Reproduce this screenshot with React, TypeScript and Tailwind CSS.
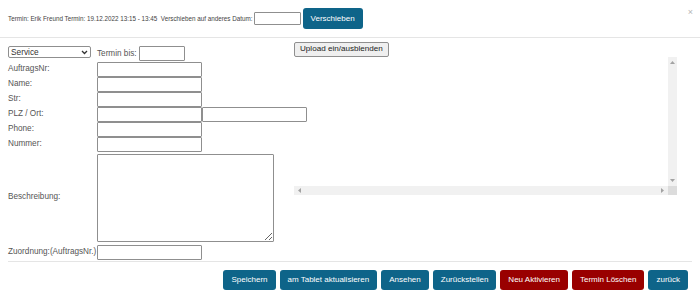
import React from 'react';

const inputCls = 'block h-[15px] w-[105px] border border-[#8f8f8f] bg-white rounded-[1px]';

const fields = ['AuftragsNr:', 'Name:', 'Str:', 'PLZ / Ort:', 'Phone:', 'Nummer:'];

function Btn({ children, red }: { children: React.ReactNode; red?: boolean }) {
  return (
    <button
      className={
        'h-[20px] px-[8px] rounded-[3px] text-white text-[8px] leading-none ' +
        (red ? 'bg-[#990000]' : 'bg-[#0e6489]')
      }
    >
      {children}
    </button>
  );
}

export default function App() {
  return (
    <div className="relative w-[700px] h-[293px] bg-white overflow-hidden text-[#444] font-['Liberation_Sans',Arial,sans-serif]">
      {/* header */}
      <div className="h-[38px] flex items-center pl-[8px] border-b border-[#e5e5e5]">
        <span className="text-[6.3px] text-[#444] whitespace-pre">
          Termin: Erik Freund Termin: 19.12.2022 13:15 - 13:45  Verschieben auf anderes Datum:
        </span>
        <input className="ml-[1px] h-[13px] w-[47px] border border-[#8f8f8f] rounded-[1px]" />
        <button className="ml-[2px] h-[21px] w-[60px] rounded-[3px] bg-[#0e6489] text-white text-[8px]">
          Verschieben
        </button>
      </div>
      <span className="absolute right-[7px] top-[8px] text-[9px] leading-none text-[#b5b5b5]">×</span>

      {/* body */}
      <div className="flex pl-[8px]">
        <div className="w-[286px] shrink-0 pt-[8px] text-[8.2px] text-[#555]">
          <div className="flex items-start gap-[6px] h-[16px]">
            <div className="h-[12px] w-[83px] border border-[#8f8f8f] rounded-[2px] flex items-center justify-between px-[2px] text-[8.3px] text-[#333]">
              <span>Service</span>
              <svg width="7" height="5" viewBox="0 0 7 5">
                <path d="M1 1 L3.5 3.5 L6 1" fill="none" stroke="#333" strokeWidth="1.3" />
              </svg>
            </div>
            <div className="flex items-center gap-[2px]">
              <span className="mt-[1px]">Termin bis:</span>
              <input className="h-[15px] w-[46px] border border-[#8f8f8f] rounded-[1px]" />
            </div>
          </div>
          <div className="grid grid-cols-[89px_auto] items-center">
            {fields.map((f) => (
              <React.Fragment key={f}>
                <span>{f}</span>
                <div className="flex">
                  <input className={inputCls} />
                  {f === 'PLZ / Ort:' && <input className={inputCls} />}
                </div>
              </React.Fragment>
            ))}
            <span>Beschreibung:</span>
            <textarea className="block mt-[2px] h-[88px] w-[177px] border border-[#8f8f8f] rounded-[1px] resize" />
          </div>
          <div className="flex items-center mt-[3px]">
            <span className="w-[89px] whitespace-nowrap">Zuordnung:(AuftragsNr.)</span>
            <input className={inputCls} />
          </div>
        </div>

        {/* upload side */}
        <div className="w-[383px] shrink-0 pt-[4px]">
          <button className="block h-[15px] px-[5px] border border-[#8f8f8f] bg-[#efefef] rounded-[2px] text-[8.1px] text-[#222] leading-none">
            Upload ein/ausblenden
          </button>
          <div className="relative h-[138px] w-[383px]">
            <div className="absolute right-0 top-0 w-[9px] h-[129px] bg-[#f1f1f1] flex flex-col items-center justify-between py-[4px]">
              <svg width="5" height="3" viewBox="0 0 5 3"><path d="M0 3 L2.5 0 L5 3Z" fill="#a3a3a3" /></svg>
              <svg width="5" height="3" viewBox="0 0 5 3"><path d="M0 0 L2.5 3 L5 0Z" fill="#a3a3a3" /></svg>
            </div>
            <div className="absolute left-0 bottom-0 w-[374px] h-[9px] bg-[#f1f1f1] flex items-center justify-between px-[4px]">
              <svg width="3" height="5" viewBox="0 0 3 5"><path d="M3 0 L0 2.5 L3 5Z" fill="#a3a3a3" /></svg>
              <svg width="3" height="5" viewBox="0 0 3 5"><path d="M0 0 L3 2.5 L0 5Z" fill="#a3a3a3" /></svg>
            </div>
            <div className="absolute right-0 bottom-0 w-[9px] h-[9px] bg-[#dcdcdc]" />
          </div>
        </div>
      </div>

      {/* footer */}
      <div className="mx-[8px] mt-[1px] border-t border-[#e5e5e5] flex justify-end gap-[4px] pt-[8px] pr-[4px]">
        <Btn>Speichern</Btn>
        <Btn>am Tablet aktualisieren</Btn>
        <Btn>Ansehen</Btn>
        <Btn>Zurückstellen</Btn>
        <Btn red>Neu Aktivieren</Btn>
        <Btn red>Termin Löschen</Btn>
        <Btn>zurück</Btn>
      </div>
    </div>
  );
}
